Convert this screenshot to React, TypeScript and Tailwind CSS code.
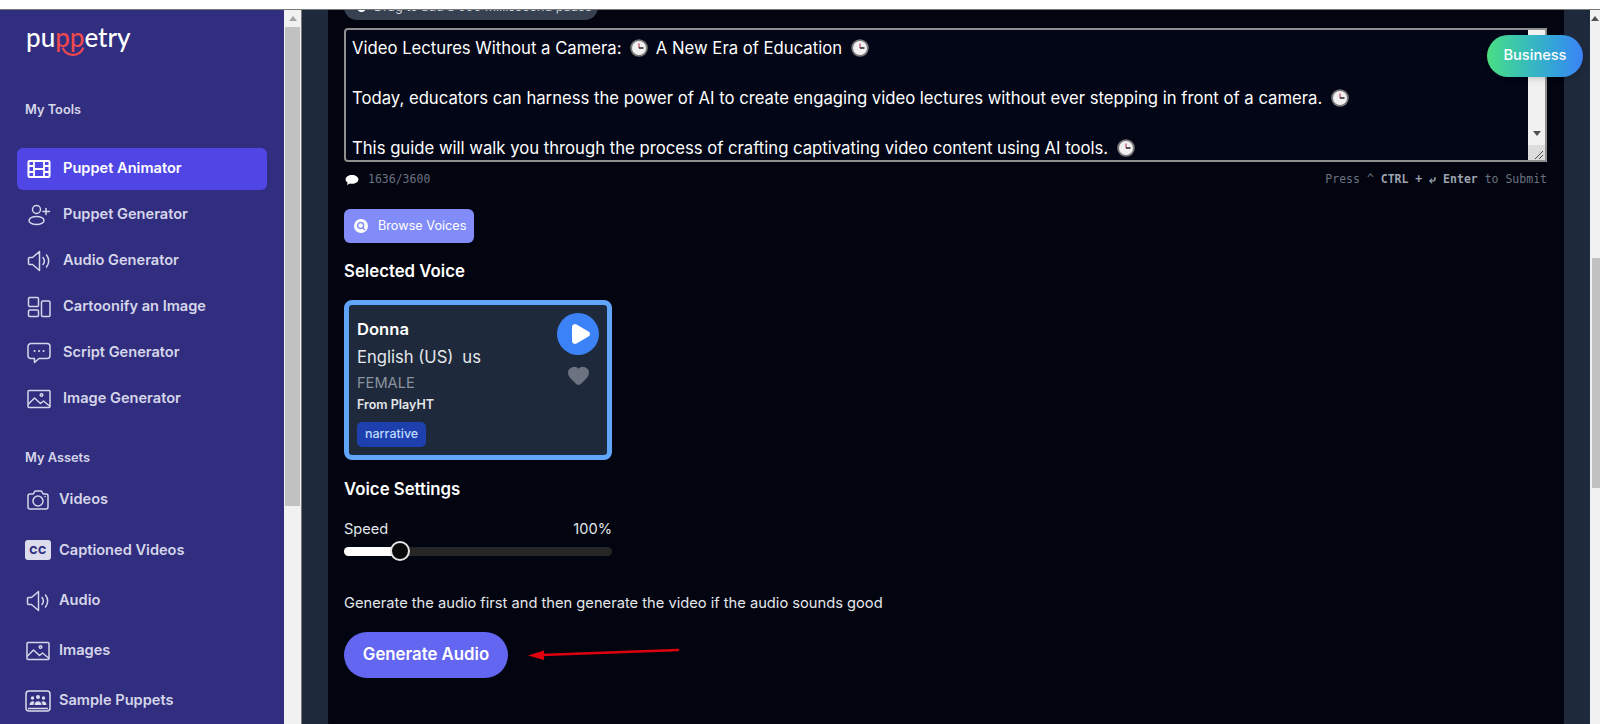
import { Play, Heart } from 'lucide-react'
import type { ReactNode } from 'react'

function Clock() {
  return (
    <svg viewBox="0 0 18 18" className="inline-block w-[18px] h-[18px] ml-[4px] mr-[3px] align-[-3px]">
      <circle cx="9" cy="9" r="8.8" fill="#777" />
      <circle cx="9" cy="9" r="7" fill="#f1eff0" />
      <path d="M9 4.500V9" stroke="#c2476b" strokeWidth="1.200" />
      <path d="M9 9H13.500" stroke="#222" strokeWidth="1.400" />
    </svg>
  )
}

function Icon({ children }: { children: ReactNode }) {
  return (
    <svg viewBox="0 0 24 24" fill="none" stroke="currentColor" strokeWidth="1.500" strokeLinejoin="round" strokeLinecap="round" className="w-[24px] h-[24px]">
      {children}
    </svg>
  )
}

const FilmIcon = () => (
  <Icon>
    <rect x="1.500" y="4" width="21" height="16" rx="1" strokeWidth="2" />
    <path d="M7 4v16M17 4v16M1.500 9H7M1.500 15H7M17 9h5.500M17 15h5.500M7 12h10" strokeWidth="1.800" />
  </Icon>
)
const UserPlusIcon = () => (
  <Icon>
    <circle cx="9.500" cy="6.500" r="4" />
    <ellipse cx="9.500" cy="17.500" rx="7.500" ry="4" />
    <path d="M19 5.500v6M16 8.500h6.500" />
  </Icon>
)
const SpeakerIcon = () => (
  <Icon>
    <path d="M1.500 9.500a1 1 0 0 1 1-1h3L12.500 2.500v19L5.500 15.500h-3a1 1 0 0 1-1-1z" />
    <path d="M16 8.500c1.600 2 1.600 5 0 7M19.500 6c2.900 3.500 2.900 8.500 0 12" />
  </Icon>
)
const CartoonIcon = () => (
  <Icon>
    <rect x="1.500" y="2.500" width="10" height="9" rx="1.200" />
    <rect x="1.500" y="15" width="10" height="6.500" rx="1.200" />
    <rect x="14.500" y="6" width="8.500" height="15.500" rx="1.200" />
  </Icon>
)
const ChatIcon = () => (
  <Icon>
    <path d="M4 2.500h16a3 3 0 0 1 3 3v9a3 3 0 0 1-3 3h-8l-4.500 4v-4H4a3 3 0 0 1-3-3v-9a3 3 0 0 1 3-3z" />
    <path d="M7.500 10h.1M12 10h.1M16.500 10h.1" strokeWidth="2" />
  </Icon>
)
const PictureIcon = () => (
  <Icon>
    <rect x="1" y="3.500" width="22" height="17" rx="1" />
    <path d="M1.500 17l6-6 6 5.500 3-2.500 6 5" />
    <circle cx="14.500" cy="8" r="1.300" />
  </Icon>
)
const CameraIcon = () => (
  <Icon>
    <path d="M2 8a2 2 0 0 1 2-2h2.500c.6 0 1-.3 1.300-.8l.7-1.500c.3-.5.700-.7 1.200-.7h5c.5 0 .9.200 1.200.7l.7 1.500c.3.500.7.8 1.300.8H20a2 2 0 0 1 2 2v11a2 2 0 0 1-2 2H4a2 2 0 0 1-2-2z" />
    <circle cx="12" cy="13" r="5" />
    <path d="M19 8.500h.1" />
  </Icon>
)

function CC() {
  return (
    <span className="flex items-center justify-center w-[26px] h-[20px] rounded-[3px] bg-[#dcdcec] text-[#312e81] text-[11px] font-extrabold tracking-[0.5px]">CC</span>
  )
}

function People() {
  return (
    <svg viewBox="0 0 26 22" className="w-[26px] h-[22px]">
      <rect x="1" y="1" width="24" height="20" rx="3" fill="none" stroke="#dcdcec" strokeWidth="1.500" />
      <path d="M3 18.500h20" stroke="#dcdcec" strokeWidth="1.500" />
      <g fill="#dcdcec">
        <circle cx="13" cy="7" r="2" />
        <circle cx="7.500" cy="8" r="1.700" />
        <circle cx="18.500" cy="8" r="1.700" />
        <path d="M9.500 15c0-5 7-5 7 0zM4.500 15c0-4 4-4.500 5-3-.8 1-1 2-1 3zM21.500 15c0-4-4-4.500-5-3 .8 1 1 2 1 3z" />
      </g>
    </svg>
  )
}

const tools: { label: string; icon: ReactNode; active?: boolean }[] = [
  { label: 'Puppet Animator', icon: <FilmIcon />, active: true },
  { label: 'Puppet Generator', icon: <UserPlusIcon /> },
  { label: 'Audio Generator', icon: <SpeakerIcon /> },
  { label: 'Cartoonify an Image', icon: <CartoonIcon /> },
  { label: 'Script Generator', icon: <ChatIcon /> },
  { label: 'Image Generator', icon: <PictureIcon /> },
]

const assets: { label: string; icon: ReactNode }[] = [
  { label: 'Videos', icon: <CameraIcon /> },
  { label: 'Captioned Videos', icon: <CC /> },
  { label: 'Audio', icon: <SpeakerIcon /> },
  { label: 'Images', icon: <PictureIcon /> },
  { label: 'Sample Puppets', icon: <People /> },
]

function Sidebar() {
  return (
    <aside className="w-[284px] shrink-0 bg-[#312e7f] text-[#d6d6ea] overflow-hidden">
      <div className="relative h-[38px] pl-[26px] pt-[12px]">
        <span className="text-[26px] leading-[30px] text-white font-medium font-['Lato',sans-serif]">
          pu<span className="text-[#f0484f]">pp</span>etry
        </span>
        <svg viewBox="0 0 24 9" className="absolute left-[61px] top-[37px] w-[24px] h-[9px]">
          <path d="M2 1.500c4 8.500 16 8.500 20 0" fill="none" stroke="#f0484f" strokeWidth="2.200" strokeLinecap="round" />
        </svg>
      </div>
      <p className="mt-[54px] pl-[25px] text-[12.800px] leading-[16px] font-semibold">My Tools</p>
      <nav className="mt-[29.500px] mx-[17px] flex flex-col gap-[4px]">
        {tools.map(t => (
          <a key={t.label} className={`flex items-center gap-[12px] h-[42px] pl-[10px] rounded-[6px] text-[14.600px] font-semibold ${t.active ? 'bg-[#4f46e5] text-white' : ''}`}>
            <span className="w-[24px] flex justify-center shrink-0">{t.icon}</span>
            {t.label}
          </a>
        ))}
      </nav>
      <p className="mt-[30.500px] pl-[25px] text-[12.800px] leading-[16px] font-semibold">My Assets</p>
      <nav className="mt-[13px] pl-[25px] flex flex-col gap-[8px]">
        {assets.map(a => (
          <a key={a.label} className="flex items-center gap-[8px] h-[42.300px] text-[14.600px] font-semibold">
            <span className="w-[26px] flex justify-center shrink-0">{a.icon}</span>
            {a.label}
          </a>
        ))}
      </nav>
    </aside>
  )
}

function Textbox() {
  return (
    <div className="mt-[8px] flex h-[134px] rounded-l-[4px] border-2 border-[#8f8f8f] bg-[#020617] overflow-hidden">
      <div className="flex-1 px-[6px] pt-[6px] text-[16.680px] leading-[25px] text-white overflow-hidden whitespace-nowrap">
        <p>Video Lectures Without a Camera: <Clock /> A New Era of Education <Clock /></p>
        <p className="mt-[25px]">Today, educators can harness the power of AI to create engaging video lectures without ever stepping in front of a camera. <Clock /></p>
        <p className="mt-[25px]">This guide will walk you through the process of crafting captivating video content using AI tools. <Clock /></p>
      </div>
      <div className="w-[17px] shrink-0 bg-[#f1f1f1] flex flex-col items-center justify-end">
        <span className="mb-[9px] w-0 h-0 border-x-[4px] border-x-transparent border-t-[5px] border-t-[#505050]" />
        <span className="relative w-full h-[15px] bg-[#dcdcdc]">
          <svg viewBox="0 0 15 15" className="absolute inset-0 w-full h-full"><path d="M6 14L14 6M10 14L14 10" stroke="#444" strokeWidth="1" /></svg>
        </span>
      </div>
    </div>
  )
}

function VoiceCard() {
  return (
    <div className="mt-[17px] w-[268px] h-[160px] rounded-[8px] border-[5px] border-[#60a5fa] bg-[#1e293b] px-[8px] pt-[12px] flex justify-between">
      <div>
        <p className="text-[16.600px] leading-[24px] font-semibold text-white">Donna</p>
        <p className="mt-[4px] text-[16.600px] leading-[24px] text-[#e5e7eb]">English (US)<span className="ml-[9px]">us</span></p>
        <p className="mt-[4px] text-[14.600px] leading-[20px] text-[#8b93a0]">FEMALE</p>
        <p className="mt-[3px] text-[12.500px] leading-[18px] font-semibold text-[#e5e7eb]">From PlayHT</p>
        <span className="mt-[8px] inline-flex items-center h-[25px] px-[8px] rounded-[5px] bg-[#1e40af] text-[12.500px] font-medium text-[#bfdbfe]">narrative</span>
      </div>
      <div className="flex flex-col items-center -mt-[4px]">
        <span className="flex items-center justify-center w-[42px] h-[42px] rounded-full bg-[#3b82f6]">
          <Play size={24} fill="white" stroke="white" className="ml-[3px]" />
        </span>
        <Heart size={23} fill="#6b7280" stroke="#6b7280" className="mt-[9px]" />
      </div>
    </div>
  )
}

function Main() {
  return (
    <main className="relative flex-1 bg-[#1e293b] pl-[26px] pr-[26px] overflow-hidden">
      <div className="h-[730px] bg-[#020510] rounded-[8px] pl-[16px] pr-[17px] -mt-[10px] font-['Inter',sans-serif]">
        <div className="h-[20px] relative overflow-hidden">
          <span className="absolute left-0 bottom-0 flex items-center gap-[8px] h-[26px] w-[254px] pl-[13px] rounded-full bg-[#374151] text-[12.600px] text-[#d1d5db] whitespace-nowrap">
            <span className="w-[9px] h-[9px] rounded-full bg-white shrink-0" />
            Drag to add a 500 millisecond pause
          </span>
        </div>
        <Textbox />
        <div className="mt-[8px] flex justify-between items-center h-[20px] font-['DejaVu_Sans_Mono',monospace] text-[11.500px] text-[#6b7280]">
          <span className="flex items-center gap-[9px]">
            <svg viewBox="0 0 14 12" className="w-[14px] h-[12px] ml-[1px]"><path d="M7 1C3.400 1 .6 2.900.6 5.400c0 1.300.8 2.400 2 3.200L2 11l3-1.500c.6.1 1.300.2 2 .2 3.600 0 6.400-1.900 6.400-4.300S10.600 1 7 1z" fill="#fff" /></svg>
            1636/3600
          </span>
          <span>Press ^ <b className="text-[#9ca3af]">CTRL + ⤶ Enter</b> to Submit</span>
        </div>
        <button className="mt-[19px] flex items-center gap-[10px] h-[34px] w-[130px] pl-[10px] rounded-[6px] bg-[#818cf8] text-[12.700px] text-white">
          <svg viewBox="0 0 14 14" className="w-[14px] h-[14px]">
            <circle cx="7" cy="7" r="7" fill="#fff" />
            <circle cx="6.600" cy="6.600" r="3" fill="none" stroke="#818cf8" strokeWidth="1.500" />
            <path d="M9 9l2 2" stroke="#818cf8" strokeWidth="1.500" />
          </svg>
          Browse Voices
        </button>
        <h3 className="mt-[16px] text-[16.800px] leading-[24px] font-semibold text-white">Selected Voice</h3>
        <VoiceCard />
        <h3 className="mt-[17px] text-[16.800px] leading-[24px] font-semibold text-white">Voice Settings</h3>
        <div className="mt-[18px] w-[268px]">
          <div className="flex justify-between text-[14.600px] leading-[20px] text-[#e5e7eb]">
            <span>Speed</span><span>100%</span>
          </div>
          <div className="relative mt-[8px] h-[9px] rounded-full bg-[#262626]">
            <div className="h-full w-[56px] rounded-full bg-white" />
            <span className="absolute left-[46px] top-[-6px] w-[20px] h-[20px] rounded-full bg-[#0a0a0a] border-2 border-[#e5e5e5]" />
          </div>
        </div>
        <p className="mt-[37px] text-[14.680px] leading-[20px] text-[#e5e7eb]">Generate the audio first and then generate the video if the audio sounds good</p>
        <div className="relative mt-[19px]">
          <button className="h-[46px] w-[164px] rounded-full bg-[#6366f1] text-white text-[16.800px] font-semibold">Generate Audio</button>
          <svg viewBox="0 0 152 16" className="absolute left-[184px] top-[14px] w-[152px] h-[16px]">
            <path d="M14 9L150 4" stroke="#e00010" strokeWidth="2.500" strokeLinecap="round" />
            <path d="M0 9.500L16 4.500V14z" fill="#e00010" />
          </svg>
        </div>
      </div>
      <button className="absolute top-[25px] right-[7px] w-[96px] h-[42px] rounded-full bg-gradient-to-r from-[#4ade80] to-[#3b82f6] text-white text-[14.600px] font-medium shadow-md">Business</button>
    </main>
  )
}

export default function App() {
  return (
    <div className="h-[724px] overflow-hidden flex flex-col bg-white font-['Inter',sans-serif]">
      <div className="h-[10px] shrink-0 bg-white border-b border-[#777]" />
      <div className="flex-1 min-h-0 flex">
        <Sidebar />
        <div className="w-[18px] shrink-0 bg-[#f1f1f1] border-r border-[#777] flex flex-col items-center">
          <span className="mt-[6px] w-0 h-0 border-x-[4px] border-x-transparent border-b-[5px] border-b-[#a3a3a3]" />
          <span className="mt-[6px] w-[15px] h-[479px] bg-[#c1c1c1]" />
        </div>
        <Main />
        <div className="w-[10px] shrink-0 bg-[#f1f1f1] flex flex-col items-end">
          <span className="mt-[6px] mr-[1px] w-0 h-0 border-x-[4px] border-x-transparent border-b-[5px] border-b-[#505050]" />
          <span className="mt-[237px] w-[8px] h-[230px] bg-[#c1c1c1]" />
        </div>
      </div>
    </div>
  )
}
